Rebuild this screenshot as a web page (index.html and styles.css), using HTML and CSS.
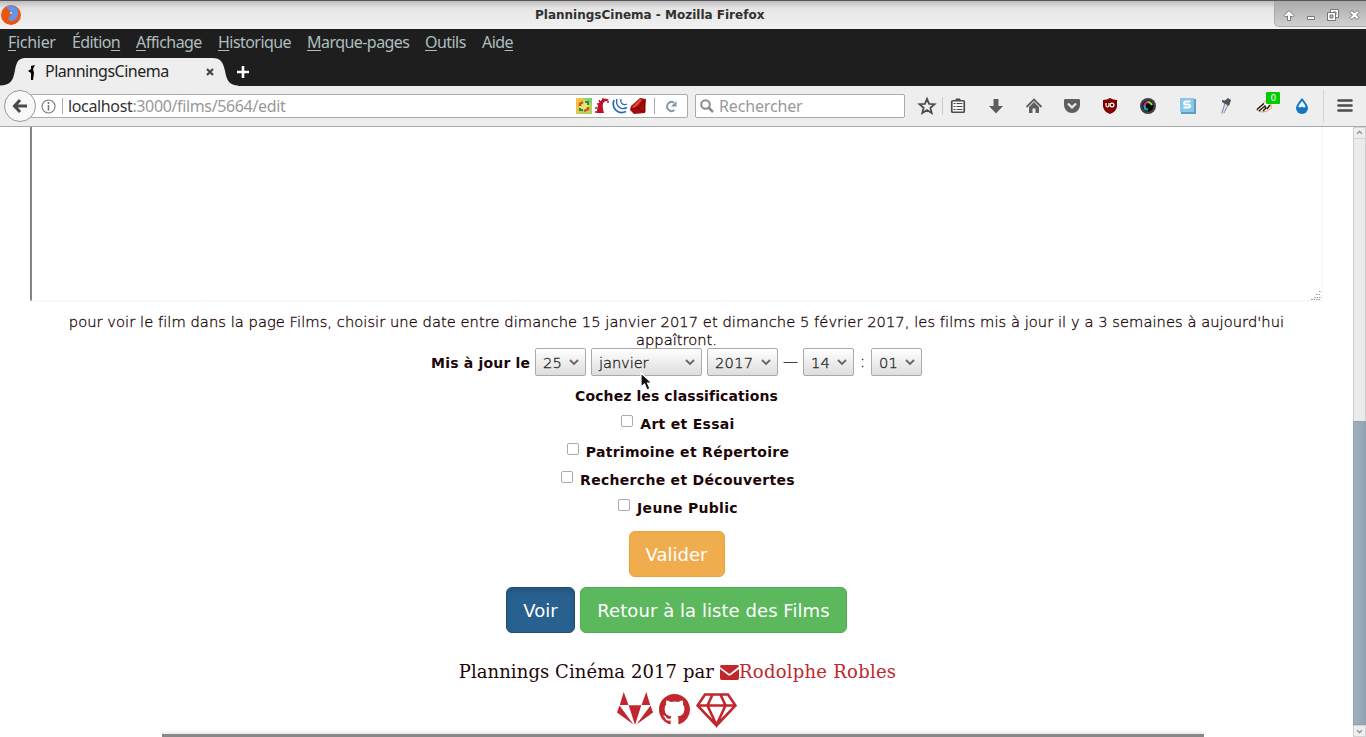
FILE: index.html
```html
<!DOCTYPE html>
<html lang="fr">
<head>
<meta charset="utf-8">
<title>PlanningsCinema</title>
<link rel="stylesheet" href="styles.css">
</head>
<body>
<header class="titlebar">
  <svg class="fox" width="20" height="20" viewBox="0 0 20 20"><circle cx="10" cy="10" r="10" fill="#ea560d"/><path d="M5 2C9-1 16 1 17 6c1 6-2 9-6 10-3 0-4-2-4-4l3 1-3-3 1-2-3-1z" fill="#6594e8"/><path d="M2 4l2 1 1-3 3 3 2 1-2 2 3 2-2 1-3-1 2 5-4-2z" fill="#ea560d"/><circle cx="10" cy="8" r="1" fill="#dbe6fb"/></svg>
  <div class="window-title">PlanningsCinema - Mozilla Firefox</div>
  <div class="window-buttons">
    <svg width="92" height="26" viewBox="1 1 92 26" stroke-linejoin="round"><g fill="#fff" stroke="#777" stroke-width="1"><path d="M15 10.500l5 5-1.500 1.500-2-1v4.500h-3V16l-2 1-1.500-1.500z"/><path d="M33.500 16.500h7v3h-7z"/><path d="M56.500 9.500h8v8h-8z"/><path d="M59 12h3v3h-3z"/><path d="M53.500 12.500h8v8h-8z"/><path d="M56 15h3v3h-3z" fill="#bbb"/><path d="M76 12.500l2-2 2.500 2.500 2.500-2.500 2 2-2.500 2.500 2.500 2.500-2 2-2.500-2.500-2.500 2.500-2-2 2.500-2.500z"/></g></svg>
  </div>
</header>
<nav class="menubar"><span class="m1"><u>F</u>ichier</span><span class="m2">Éditio<u>n</u></span><span class="m3"><u>A</u>ffichage</span><span class="m4"><u>H</u>istorique</span><span class="m5"><u>M</u>arque-pages</span><span class="m6"><u>O</u>utils</span><span>Aid<u>e</u></span></nav>
<div class="tabstrip">
  <svg class="tab-shape" width="240" height="30" viewBox="0 0 240 30"><path d="M0 28.500C10 28 13 25 15 13 17 3 19 1 27 1H212c9 0 11 4 13 13 2 11 5 14 13 14.500V30H0z" fill="#eee"/></svg>
  <div class="tab">
    <svg width="10" height="16" viewBox="0 0 10 16"><path d="M4 2l4-1-2 4 1 4-1 7H4V9L1 7l3-2z" fill="#000"/></svg>
    <span>PlanningsCinema</span>
    <svg class="tab-close" width="8" height="8" viewBox="0 0 8 8"><path d="M1 1l6 6M7 1L1 7" stroke="#444" stroke-width="2.200"/></svg>
  </div>
  <svg class="tab-new" width="14" height="14" viewBox="0 0 14 14"><path d="M7 1v12M1 7h12" stroke="#fff" stroke-width="2.600"/></svg>
</div>
<div class="toolbar">
  <div class="back"><svg width="16" height="16" viewBox="0 0 16 16"><path d="M8 2L2.500 8 8 14M3 8h12" fill="none" stroke="#4a4a4a" stroke-width="3"/></svg></div>
  <div class="urlbar">
    <svg width="15" height="15" viewBox="0 0 15 15"><circle cx="7.500" cy="7.500" r="6.500" fill="none" stroke="#777" stroke-width="1.100"/><path d="M7.500 3v2M7.500 6v5.500" stroke="#777" stroke-width="1.600"/></svg>
    <i class="divider"></i>
    <span class="url"><b>localhost</b>:3000/films/5664/edit</span>
    <span class="url-icons">
      <svg width="16" height="16" viewBox="0 0 16 16"><path d="M0 0h16v16H0z" fill="#b8cf62"/><path d="M0 0h7L2 16H0z" fill="#f2c33d"/><path d="M9 0h7v7z" fill="#83cf6e"/><circle cx="8" cy="8" r="5" fill="#e7e96b"/><path d="M4 8V6l3-2M12 9v2l-4 2" stroke="#d64c30" stroke-width="2.500" fill="none"/><path d="M9 4h3v3M7 12H4v-2" stroke="#218c59" stroke-width="2" fill="none"/></svg>
      <svg width="16" height="16" viewBox="0 0 16 16"><path d="M3 15C3 8 5 2 10 1c2-.5 4 0 5 1l-2 1C8 3 8 8 10 15z" fill="#bd1026"/><path d="M1 14h2M1 10h2M3 6h2M5 2l1 2M9 0v2M14 3v2" stroke="#bd1026" stroke-width="1.500"/></svg>
      <svg width="16" height="16" viewBox="0 0 16 16" fill="none" stroke="#2967b2"><path d="M2 2C-1 10 6 17 14 13.500" stroke-width="1.700"/><path d="M5 1C3 7 8 13 15 9.500" stroke-width="1.400"/><path d="M9 1C8 5 11 8 15 6" stroke-width="1.200"/></svg>
      <svg width="16" height="16" viewBox="0 0 16 16"><path d="M10 0l6 1-1 14-11 1-4-4 1-4z" fill="#a80d0d"/><path d="M2 9l8-8 2 1-5 6-4 2z" fill="#ed4534"/><path d="M3 11l5-1 5 4M8 10l6-7 1 11" fill="none" stroke="#700404"/></svg>
    </span>
    <i class="divider reload-divider"></i>
    <svg width="12" height="13" viewBox="0 0 12 13"><path d="M9 2.700A4.500 4.500 0 1 0 9.500 10" fill="none" stroke="#8496a6" stroke-width="1.900"/><path d="M11.500 1v5.500H6z" fill="#8496a6"/></svg>
  </div>
  <div class="search"><svg width="14" height="14" viewBox="0 0 14 14"><circle cx="5.500" cy="5.500" r="4.300" fill="none" stroke="#8c8c8c" stroke-width="2"/><path d="M8.500 8.500l4.500 4.500" stroke="#8c8c8c" stroke-width="2.500"/></svg><span>Rechercher</span></div>
  <svg class="tools" width="455" height="39" viewBox="911 87 455 39">
    <path d="M927 98.800l2.100 5 5.400.4-4.100 3.500 1.300 5.300-4.700-2.900-4.700 2.900 1.300-5.300-4.100-3.500 5.400-.4z" fill="none" stroke="#4d4d4d" stroke-width="1.800"/>
    <path d="M942.500 97v18" stroke="#ccc"/>
    <path d="M956 99h4v2h-4z" fill="#4d4d4d" stroke="#4d4d4d"/><rect x="951.750" y="100.750" width="12.500" height="11.500" rx="1" fill="#f6f6f6" stroke="#4d4d4d" stroke-width="1.700"/><path d="M953.500 103.500h2M956.500 103.500h6M953.500 106.500h2M956.500 106.500h6M953.500 109.500h2M956.500 109.500h6" stroke="#4d4d4d"/>
    <path d="M993.500 99h5v7h4.500l-7 7.500-7-7.500h4.500z" fill="#5e5e5e"/>
    <path d="M1026.500 107l7.500-7.500 7.500 7.500" fill="none" stroke="#5e5e5e" stroke-width="1.800"/><path d="M1034 102l5 5v6h-3.500v-4.500h-3v4.500h-3.500v-6z" fill="#5e5e5e"/>
    <path d="M1065 99h14l1 1v5a8 8 0 0 1-16 0v-5z" fill="#5e5e5e"/><path d="M1068 103.500l4 4 4-4" fill="none" stroke="#eee" stroke-width="2.200"/>
    <path d="M1110 98q3 2 7 2v6q0 5-7 8-7-3-7-8v-6q4 0 7-2z" fill="#800000"/><path d="M1106 103v2q0 2 1.500 2t1.500-2v-2" stroke="#fff" fill="none" stroke-width="1.200"/><circle cx="1112" cy="105" r="1.900" stroke="#fff" fill="none" stroke-width="1.200"/>
    <circle cx="1148" cy="106" r="8" fill="#414143"/><circle cx="1148" cy="106" r="5.500" fill="#080808"/><g fill="none" stroke-width="2.200"><path d="M1144.500 106q0-3 3-4" stroke="#c5249e"/><path d="M1147.500 102q3 0 4.500 3" stroke="#9bd622"/><path d="M1144.500 105.500q0 3 1.500 4" stroke="#24a7e6"/><path d="M1146 109l2 1" stroke="#25a84d"/></g>
    <path d="M1181 99h15v15h-15z" fill="#5e9fbd"/><path d="M1180 98h14v14h-14z" fill="#89c9e8"/><path d="M1190.500 101.500h-4.500q-2 0-2 1.500t2 1.500h2q2 0 2 1.500t-2 1.500h-4.500" fill="none" stroke="#fff" stroke-width="2"/>
    <path d="M1226 104l-4 9" stroke="#d9e0f0" stroke-width="4" stroke-linecap="round"/><path d="M1225 103l-3 10M1228 105l-4 8" stroke="#868b98"/><path d="M1222 100l3 .5 3-2.500 3 2-1 3-1 3-7-4z" fill="#4c5058"/>
    <path d="M1256.500 110l6-6 4-4 4 3 1 5-5 3.500-5 .5z" fill="#fff6ed" stroke="#e69b5d"/><path d="M1257 109.500l7-6M1259 111l6-5 1 2-3 3M1267 109l3-4" fill="none" stroke="#111" stroke-width="1.300"/><rect x="1266" y="92" width="14" height="12" rx="1" fill="#0c0"/><text x="1270.500" y="101" class="badge">0</text>
    <path d="M1302 98q6 7 6 10a6 6 0 0 1-12 0q0-3 6-10z" fill="#1176bd"/><path d="M1302 101q-4 5-3.500 6 1.500 1 3.500-.5 2 1.500 3.500.5 0-2-3.500-6z" fill="#f2f8ff"/>
    <path d="M1323.500 90v33" stroke="#d5d5d5"/><path d="M1338.500 100.500h13M1338.500 105.500h13M1338.500 110.500h13" stroke="#4b4b4b" stroke-width="2.600" stroke-linecap="round"/>
  </svg>
</div>
<div class="viewport">
  <main class="page">
    <div class="textarea"><svg width="10" height="10" viewBox="0 0 10 10"><path d="M8 1.500h2M5 4.500h5M3 7.500h7M0 9.500h10" stroke="#999" stroke-dasharray="1.500 1"/></svg></div>
    <p class="hint"><span class="hint-a">pour voir le film dans la page Films, choisir une date entre dimanche 15 janvier 2017 et dimanche 5 février 2017, les films mis à jour il y a 3 semaines à aujourd'hui</span><br><span class="hint-b">appaîtront.</span></p>
    <div class="date-row"><label class="bold">Mis à jour le</label>
      <div class="select day"><span>25</span><svg width="10" height="7" viewBox="0 0 10 7"><path d="M1 1l4 4 4-4"/></svg></div>
      <div class="select month"><span>janvier</span><svg width="10" height="7" viewBox="0 0 10 7"><path d="M1 1l4 4 4-4"/></svg></div>
      <div class="select year"><span>2017</span><svg width="10" height="7" viewBox="0 0 10 7"><path d="M1 1l4 4 4-4"/></svg></div>
      <span class="dash">—</span>
      <div class="select hour"><span>14</span><svg width="10" height="7" viewBox="0 0 10 7"><path d="M1 1l4 4 4-4"/></svg></div>
      <span class="colon">:</span>
      <div class="select minute"><span>01</span><svg width="10" height="7" viewBox="0 0 10 7"><path d="M1 1l4 4 4-4"/></svg></div>
      <svg class="cursor" width="14" height="20" viewBox="0 0 14 20"><path d="M1 1v14l3.500-3 2.500 6 3-1.500L7.500 11H12z" fill="#111" stroke="#fff" stroke-width="1.200"/></svg>
    </div>
    <div class="bold heading">Cochez les classifications</div>
    <div class="check"><i></i><span class="bold">Art et Essai</span></div>
    <div class="check"><i></i><span class="bold">Patrimoine et Répertoire</span></div>
    <div class="check"><i></i><span class="bold">Recherche et Découvertes</span></div>
    <div class="check"><i></i><span class="bold">Jeune Public</span></div>
    <div class="buttons first"><a class="btn valid">Valider</a></div>
    <div class="buttons"><a class="btn view">Voir</a><a class="btn list">Retour à la liste des Films</a></div>
    <footer class="footer"><span>Plannings Cinéma 2017 par</span><a><svg width="19" height="15" viewBox="0 0 19 15"><path d="M0 1.500Q0 0 1.500 0h16Q19 0 19 1.500L9.500 9 0 2z"/><path d="M0 4l8 6q1.500 1 3 0l8-6v9q0 2-1.500 2h-16Q0 15 0 13z"/></svg><span class="author">Rodolphe Robles</span></a></footer>
    <div class="brands">
      <svg width="36" height="33" viewBox="0 0 36 33"><path d="M6.700 0l4.800 13H2.800zM29.300 0l3.900 13h-8.700zM11.700 13.200h12.600L18 33zM2.500 13.500L0 20.500 16.500 32.500zM33.500 13.500l2.500 7L19.500 32.500z"/></svg>
      <svg class="hub" width="31" height="31" viewBox="0 0 16 16"><path d="M8 0C3.580 0 0 3.580 0 8c0 3.540 2.290 6.530 5.470 7.590.4.070.55-.17.55-.38 0-.19-.01-.82-.01-1.490-2.010.37-2.530-.49-2.690-.94-.09-.23-.48-.94-.82-1.130-.28-.15-.68-.52-.01-.53.63-.01 1.080.58 1.230.82.720 1.210 1.870.87 2.330.66.070-.52.280-.87.510-1.070-1.780-.2-3.640-.89-3.640-3.950 0-.87.310-1.590.82-2.150-.08-.2-.36-1.020.08-2.120 0 0 .67-.21 2.200.82.640-.18 1.320-.27 2-.27s1.360.09 2 .27c1.530-1.040 2.200-.82 2.200-.82.440 1.100.160 1.920.08 2.120.510.560.820 1.270.820 2.150 0 3.070-1.870 3.750-3.650 3.950.290.250.540.730.540 1.480 0 1.070-.01 1.930-.01 2.200 0 .210.150.460.550.380A8.010 8.010 0 0 0 16 8c0-4.420-3.580-8-8-8z"/></svg>
      <svg class="gem" width="41" height="35" viewBox="0 0 41 35"><path d="M9 1.500h23L39.500 12.500 20.500 32.500 1.500 12.500zM1.500 12.500h38M16.500 1.500l-5 11 9 19.500 9-19.500-5-11"/></svg>
    </div>
    <div class="bottom-line"></div>
  </main>
  <aside class="scrollbar"><svg class="arrow" width="13" height="12" viewBox="0 0 13 12"><path d="M3.500 7l3-3 3 3"/></svg><div class="track"></div><div class="thumb"></div><svg class="arrow" width="13" height="12" viewBox="0 0 13 12"><path d="M3.500 5l3 3 3-3"/></svg></aside>
</div>
</body>
</html>
```
FILE: styles.css
```css
* { box-sizing: border-box; }
body { margin: 0; width: 1366px; height: 737px; overflow: hidden; background: #fff; display: flex; flex-direction: column; font: 16px "DejaVu Sans", sans-serif; }
svg { display: block; flex: none; }
.titlebar { height: 29px; flex: none; border-top: 1px solid #5a5658; background: linear-gradient(#bcbabc, #e4e4e4 7px, #f2f2f2); display: flex; justify-content: space-between; position: relative; }
.fox { margin: 4px 0 0 1px; }
.window-title { position: absolute; left: 535px; top: 6px; font: bold 12px/16px "DejaVu Sans", sans-serif; color: #303030; white-space: nowrap; letter-spacing: 0; }
.window-buttons { width: 92px; height: 26px; background: linear-gradient(#aaa, #d0d0d0); border-left: 1px solid #aaa; border-bottom: 1px solid #aaa; border-radius: 0 0 0 5px; }
.menubar { height: 28px; flex: none; background: #1e1e1e; color: #aebfbe; display: flex; padding-left: 8px; font: 16px/27px "Noto Sans", sans-serif; white-space: nowrap; letter-spacing: -.55px; }
.menubar .m1, .menubar .m2 { width: 64px; letter-spacing: -.3px; }
.menubar .m2 { letter-spacing: -.6px; }
.menubar .m3 { width: 82px; }
.menubar .m4 { width: 89px; }
.menubar .m5 { width: 118px; }
.menubar .m6 { width: 57px; }
.menubar u { text-underline-offset: 2px; text-decoration-thickness: 1px; }
.tabstrip { height: 29px; flex: none; background: #1e1e1e; position: relative; display: flex; }
.tab-shape { position: absolute; left: 0; top: 0; }
.tab { position: relative; display: flex; width: 230px; height: 29px; align-items: center; padding-left: 27px; gap: 8px; font: 16px/22px "Noto Sans", sans-serif; color: #222; letter-spacing: -.5px; }
.tab span { margin-top: -2px; }
.tab-close { margin-left: auto; margin-right: 16px; }
.tab-new { position: relative; margin: 8px 0 0 6px; }
.toolbar { height: 41px; flex: none; background: #eee; border-bottom: 1px solid #aaa; display: flex; align-items: center; }
.back { width: 32px; height: 32px; border: 1px solid #999; border-radius: 50%; background: #f8f8f8; margin-left: 4px; display: flex; align-items: center; justify-content: center; z-index: 1; flex: none; }
.urlbar { width: 658px; height: 24px; margin-left: -6px; border: 1px solid #aaa; border-radius: 2px; background: #fff; display: flex; align-items: center; padding-left: 10px; }
.divider { width: 1px; height: 16px; background: #aaa; margin: 0 5px 0 6px; }
.url { font: 16px/22px "Noto Sans", sans-serif; letter-spacing: -.36px; color: #999; }
.url b { color: #333; font-weight: normal; }
.url-icons { display: flex; gap: 2px; margin-left: auto; }
.reload-divider { margin: 0 10px 0 8px; }
.urlbar > svg:last-child { margin-right: 10px; }
.search { width: 210px; height: 24px; margin-left: 7px; border: 1px solid #aaa; border-radius: 2px; background: #fff; display: flex; align-items: center; padding-left: 4px; gap: 5px; color: #999; font: 16px/22px "Noto Sans", sans-serif; letter-spacing: -.15px; }
.tools { margin-left: auto; }
.badge { font: 9px "DejaVu Sans", sans-serif; fill: #fff; }
.viewport { height: 610px; flex: none; display: flex; }
.page { width: 1353px; color: #1c0608; display: flex; flex-direction: column; position: relative; }
.textarea { width: 1293px; height: 175px; flex: none; margin-left: 30px; border: 2px solid #f8f8f8; border-left-color: #858585; border-top: 0; border-radius: 0 0 3px 3px; display: flex; justify-content: flex-end; align-items: flex-end; }
.hint { height: 36px; margin: 11px 0 0; line-height: 18px; font-size: 14.7px; font-weight: 200; -webkit-text-stroke: .3px; text-align: center; white-space: nowrap; }
.hint-a { letter-spacing: .045px; }
.date-row { height: 28px; margin: -1px 0 0 431px; display: flex; align-items: center; position: relative; }
.bold { font: bold 14px/28px "DejaVu Sans", sans-serif; letter-spacing: .1px; white-space: nowrap; }
.date-row label { width: 104px; padding-top: 1px; letter-spacing: .2px; }
.select { height: 28px; border: 1px solid #aaa; border-radius: 2px; background: linear-gradient(#fff, #ddd); display: flex; align-items: center; justify-content: space-between; padding: 0 6px 0 7px; font-weight: 200; font-size: 14.7px; letter-spacing: .25px; color: #222; -webkit-text-stroke: .3px; }
.select svg { fill: none; stroke: #666; stroke-width: 1.8; }
.day, .hour, .minute { width: 51px; }
.month { width: 111px; margin: 0 5px; letter-spacing: -.1px; }
.year { width: 71px; }
.dash { width: 25px; text-align: center; font-size: 15px; font-weight: 200; -webkit-text-stroke: .3px; }
.colon { width: 17px; text-align: center; font-size: 15px; font-weight: 200; -webkit-text-stroke: .3px; }
.cursor { position: absolute; left: 209px; top: 24px; }
.heading { text-align: center; height: 28px; margin-top: 6px; }
.check { display: flex; justify-content: center; gap: 7px; height: 28px; padding-left: 3px; }
.check .bold { letter-spacing: .3px; }
.check i { width: 12px; height: 12px; margin-top: 5px; border: 1px solid #aaa; border-radius: 2px; background: #fff; }
.buttons { height: 46px; margin-top: 10px; display: flex; justify-content: center; gap: 5px; }
.buttons.first { margin-top: 9px; }
.btn { height: 46px; border: 1px solid; border-radius: 6px; color: #fff; font-size: 18px; line-height: 45px; text-align: center; white-space: nowrap; }
.valid { width: 96px; background: #f0ad4e; border-color: #eea236; }
.view { width: 69px; background: #286090; border-color: #204d74; box-shadow: inset 0 3px 5px rgba(0,0,0,.125); }
.list { width: 267px; background: #5cb85c; border-color: #4cae4c; letter-spacing: .06px; }
.footer { display: flex; justify-content: center; align-items: center; height: 28px; margin-top: 25px; padding-left: 2px; font: 18px/28px "DejaVu Serif", serif; letter-spacing: .08px; gap: 6px; white-space: nowrap; }
.footer a { display: flex; align-items: center; color: #c1272d; }
.author { letter-spacing: .25px; }
.footer svg, .brands svg { fill: #c1272d; }
.brands { display: flex; justify-content: center; gap: 6px; height: 35px; margin-top: 6px; }
.brands .hub { margin-top: 2px; }
.brands .gem { fill: none; stroke: #c1272d; stroke-width: 2.6; margin-top: 1px; }
.bottom-line { position: absolute; left: 162px; bottom: 0; width: 1042px; height: 3px; background: #888; box-shadow: 0 -2px 3px #e8e8e8; }
.scrollbar { width: 13px; display: flex; flex-direction: column; background: #ebebeb; }
.arrow { fill: none; stroke: #888; stroke-width: 1.5; background: #eee; border: 1px solid #d4d4d4; }
.track { height: 282px; border-left: 1px solid #ccc; border-right: 1px solid #ccc; }
.thumb { flex: 1; background: linear-gradient(90deg, #a2b1bf, #92a3b3); border: 1px solid #93a2b1; }
```
